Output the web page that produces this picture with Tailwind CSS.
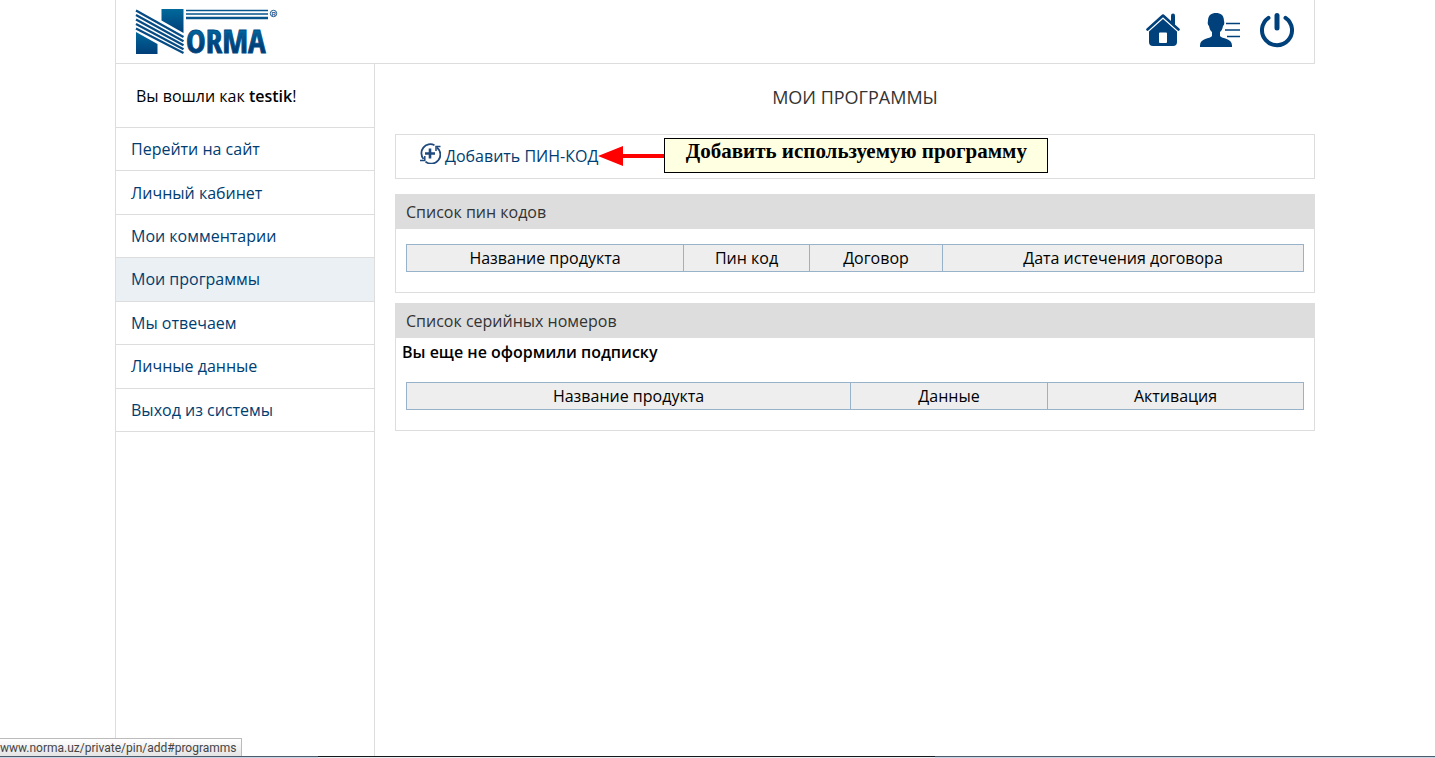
<!DOCTYPE html>
<html lang="ru">
<head>
<meta charset="utf-8">
<title>Мои программы</title>
<meta name="viewport" content="width=device-width, initial-scale=1">
<script src="https://cdn.jsdelivr.net/npm/@tailwindcss/browser@4"></script>
</head>
<body class="flex h-screen min-h-[480px] flex-col bg-white font-['Open_Sans',sans-serif] text-base text-black">
<div class="ml-[115px] mr-[120px] flex grow flex-col border-l border-[#ddd]">
  <header class="flex h-16 shrink-0 items-start justify-between border-r border-b border-[#ddd] pr-5 pl-5">
    <a href="#" aria-label="Norma" class="mt-2">
      <svg class="overflow-visible" width="144" height="48" viewBox="0 0 144 48">
        <defs>
          <linearGradient id="g" x1="0" y1="0" x2="0" y2="1">
            <stop offset="0" stop-color="#00699b"/><stop offset="1" stop-color="#003e78"/>
          </linearGradient>
          <linearGradient id="t" x1="0" y1="0" x2="0" y2="1">
            <stop offset="0.3" stop-color="#00639a"/><stop offset="0.65" stop-color="#003e78"/>
          </linearGradient>
        </defs>
        <path d="M0 24 21.500 36V46H0z" fill="url(#g)"/>
        <path d="M25.500 1H47.500V25L25.500 12.500z" fill="url(#g)"/>
        <path d="M0 2.500 47.500 29M0 7 47.500 33.200M0 11.500 47.500 37.200M0 16 47.500 41.200M0 20.500 47.500 45" stroke="#064b84" stroke-width="2.200"/>
        <path d="M50 2.500H132M50 6H132" stroke="#05548c" stroke-width="1.500"/>
        <path d="M50 10H132" stroke="#05548c" stroke-width="2.500"/>
        <circle cx="137.500" cy="5.500" r="3.200" fill="none" stroke="#1c5c91"/>
        <text x="135.500" y="7.500" font-family="Liberation Sans" font-size="6" font-weight="700" fill="#1c5c91">R</text>
        <text x="50" y="45" font-family="'Open Sans Condensed','Roboto Condensed','Noto Sans Condensed','Liberation Sans'" font-size="33" font-weight="700" fill="url(#t)" stroke="#004a82" stroke-width="0.800">ORMA</text>
      </svg>
    </a>
    <nav class="mt-3 flex gap-5" aria-label="Быстрые ссылки">
      <a href="#" aria-label="Главная">
        <svg width="34" height="36" viewBox="0 0 34 36" fill="#00417b">
          <path d="M1.500 17.500 17 3.500 32.500 17.500" fill="none" stroke="#00417b" stroke-width="2.600" stroke-linecap="round" stroke-linejoin="round"/>
          <path d="M25 3.500q0-2 2-2t2 2V13.500L25 10z"/>
          <path fill-rule="evenodd" d="M17 7 31 19.500V30q0 4-4 4H7q-4 0-4-4V19.500zM14 20.500q-1 0-1 1V30q0 1 1 1h6q1 0 1-1v-8.500q0-1-1-1z"/>
        </svg>
      </a>
      <a href="#" aria-label="Личные данные">
        <svg width="40" height="36" viewBox="0 0 40 36" fill="#00417b">
          <path d="M16 1C20.500 1 24 3 24 9c.5 1 .5 4-1 5-.5 3-1.500 5-3 6v4c2 3 12 2 12 9.500V35H0v-1.500C0 26 10 27 12 24v-4c-1.500-1-2.500-3-3-6-1.500-1-1.500-4-1-5C8 3 11.500 1 16 1z"/>
          <path d="M26 11.500H40M25 18H40M27 24.500H40" stroke="#00417b" stroke-width="1.500"/>
        </svg>
      </a>
      <button type="button" aria-label="Выход" class="cursor-pointer">
        <svg width="34" height="36" viewBox="0 0 34 36" fill="none" stroke="#00417b" stroke-linecap="round">
          <path d="M8.500 5.800A15 15 0 1 0 25.500 5.800" stroke-width="4"/>
          <path d="M17 3.500V16" stroke-width="5"/>
        </svg>
      </button>
    </nav>
  </header>
  <div class="flex grow">
    <aside class="w-[259px] shrink-0 border-r border-[#ddd]">
      <p class="flex h-16 items-center border-b border-[#ddd] px-5"><span>Вы вошли как <b class="font-semibold">testik</b>!</span></p>
      <nav class="flex h-[304px] flex-col text-[#003d71]" aria-label="Меню">
        <a href="#" class="flex flex-1 items-center border-b border-[#ddd] px-[15px]">Перейти на сайт</a>
        <a href="#" class="flex flex-1 items-center border-b border-[#ddd] px-[15px]">Личный кабинет</a>
        <a href="#" class="flex flex-1 items-center border-b border-[#ddd] px-[15px]">Мои комментарии</a>
        <a href="#" aria-current="page" class="flex flex-1 items-center border-b border-[#ddd] bg-[#ebf0f4] px-[15px]">Мои программы</a>
        <a href="#" class="flex flex-1 items-center border-b border-[#ddd] px-[15px]">Мы отвечаем</a>
        <a href="#" class="flex flex-1 items-center border-b border-[#ddd] px-[15px]">Личные данные</a>
        <a href="#" class="flex flex-1 items-center border-b border-[#ddd] px-[15px]">Выход из системы</a>
      </nav>
    </aside>
    <main class="grow pt-[19px] pl-5">
      <h1 class="text-center text-lg text-[#333]">МОИ ПРОГРАММЫ</h1>
      <div class="mt-[23px] flex h-[45px] items-start border border-[#ddd] pl-6">
        <a href="#" class="flex pt-2 leading-6 text-[#003d71]">
          <svg class="mr-1" width="21" height="21" viewBox="0 0 21 21" fill="none" stroke="#1f4a7d" stroke-width="1.800">
            <path d="M14.500 2.200A9 9 0 0 0 3.500 16M5.500 18.600A9 9 0 0 0 17 4.500"/>
            <path d="M0 17.500H4.800V13M20.500 3.500H16V8" stroke-width="1.500"/>
            <path d="M10 5.500V15.500M5 10.500H15" stroke-width="2.600"/>
          </svg>
          <span class="mt-px">Добавить ПИН-КОД</span>
        </a>
        <div class="mt-[3px] flex items-center">
          <svg width="66" height="20" viewBox="0 0 66 20" fill="#f00" aria-hidden="true"><path d="M0 10 25 0V8H66V12H25V20z"/></svg>
          <p class="h-[35px] w-96 border border-black bg-[#ffffe1] text-center font-['Liberation_Serif',serif] text-[21px] leading-6 font-bold">Добавить используемую программу</p>
        </div>
      </div>
      <section class="mt-[15px] border border-[#ddd] pb-5">
        <h2 class="-mx-px -mt-px bg-[#ddd] px-[11px] pt-1.5 pb-[5px] text-[#333]">Список пин кодов</h2>
        <div class="px-2.5 pt-[15px]">
          <table class="w-full table-fixed border-collapse bg-[#eee]">
            <thead><tr class="h-[27px]">
              <th scope="col" class="w-[277px] border border-[#98b2c9] p-0 font-normal">Название продукта</th>
              <th scope="col" class="w-[126px] border border-[#98b2c9] p-0 font-normal">Пин код</th>
              <th scope="col" class="w-[133px] border border-[#98b2c9] p-0 font-normal">Договор</th>
              <th scope="col" class="border border-[#98b2c9] p-0 font-normal">Дата истечения договора</th>
            </tr></thead>
          </table>
        </div>
      </section>
      <section class="mt-2.5 border border-[#ddd] pb-5">
        <h2 class="-mx-px -mt-px bg-[#ddd] px-[11px] pt-1.5 pb-[5px] text-[#333]">Список серийных номеров</h2>
        <p class="px-1.5 pt-0.5 font-semibold">Вы еще не оформили подписку</p>
        <div class="px-2.5 pt-[18px]">
          <table class="w-full table-fixed border-collapse bg-[#eee]">
            <thead><tr class="h-[27px]">
              <th scope="col" class="border border-[#98b2c9] p-0 font-normal">Название продукта</th>
              <th scope="col" class="w-[197px] border border-[#98b2c9] p-0 font-normal">Данные</th>
              <th scope="col" class="w-[256px] border border-[#98b2c9] p-0 font-normal">Активация</th>
            </tr></thead>
          </table>
        </div>
      </section>
    </main>
  </div>
</div>
<div class="relative flex h-0.5 shrink-0 flex-col">
  <div class="absolute bottom-full left-0 border-t border-r border-[#bbb] bg-linear-to-b from-white to-[#e4e4e4] pt-px pr-1 font-[Roboto,sans-serif] text-xs leading-4 text-[#444]">www.norma.uz/private/pin/add#programms</div>
  <div class="flex h-px"><div class="w-[318px] bg-[#4d5b6b]"></div><div class="w-[617px] bg-[#15181c]"></div><div class="grow bg-[#4d5b6b]"></div></div>
  <div class="flex h-px"><div class="w-[318px] bg-[#c5d5e6]"></div><div class="w-[617px] bg-[#e9edf2]"></div><div class="grow bg-[#c5d5e6]"></div></div>
</div>
</body>
</html>
